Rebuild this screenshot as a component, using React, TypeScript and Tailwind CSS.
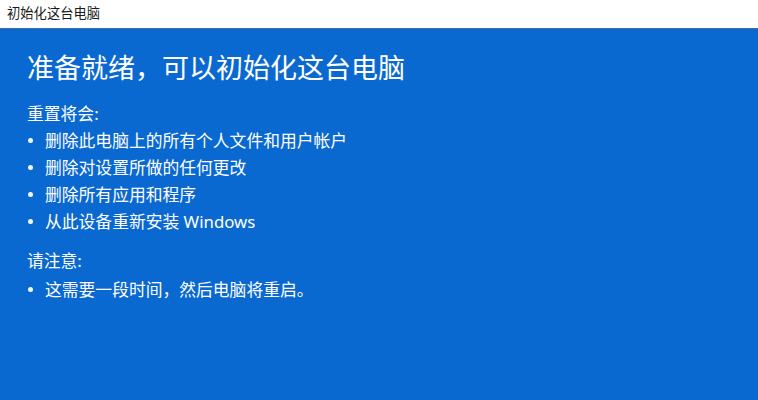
const font = { fontFamily: '"Noto Sans", "Noto Sans CJK SC", sans-serif' }

function Bullet({ children }: { children: React.ReactNode }) {
  return (
    <li className="flex h-[27px] items-center">
      <span className="ml-[1px] mr-[12px] h-[5px] w-[5px] shrink-0 rounded-full bg-white/95" />
      <span>{children}</span>
    </li>
  )
}

export default function App() {
  return (
    <div className="flex h-[400px] w-[758px] flex-col overflow-hidden" style={font}>
      <div className="flex h-[29px] shrink-0 items-center border-b border-[#3c6ea8] bg-white pl-[7px] text-[13.3px] text-[#1b1b1b]">
        初始化这台电脑
      </div>
      <div className="flex-1 bg-[#0a69d1] pl-[27px] pt-[21px] text-white">
        <h1 className="text-[27px] leading-[35px] font-normal">准备就绪，可以初始化这台电脑</h1>
        <div className="mt-[15px] text-[16.8px]">
          <p className="h-[27px] leading-[27px]">重置将会:</p>
          <ul>
            <Bullet>删除此电脑上的所有个人文件和用户帐户</Bullet>
            <Bullet>删除对设置所做的任何更改</Bullet>
            <Bullet>删除所有应用和程序</Bullet>
            <Bullet>从此设备重新安装 Windows</Bullet>
          </ul>
          <p className="mt-[12px] h-[27px] leading-[27px]">请注意:</p>
          <ul className="mt-[2px]">
            <Bullet>这需要一段时间，然后电脑将重启。</Bullet>
          </ul>
        </div>
      </div>
    </div>
  )
}
